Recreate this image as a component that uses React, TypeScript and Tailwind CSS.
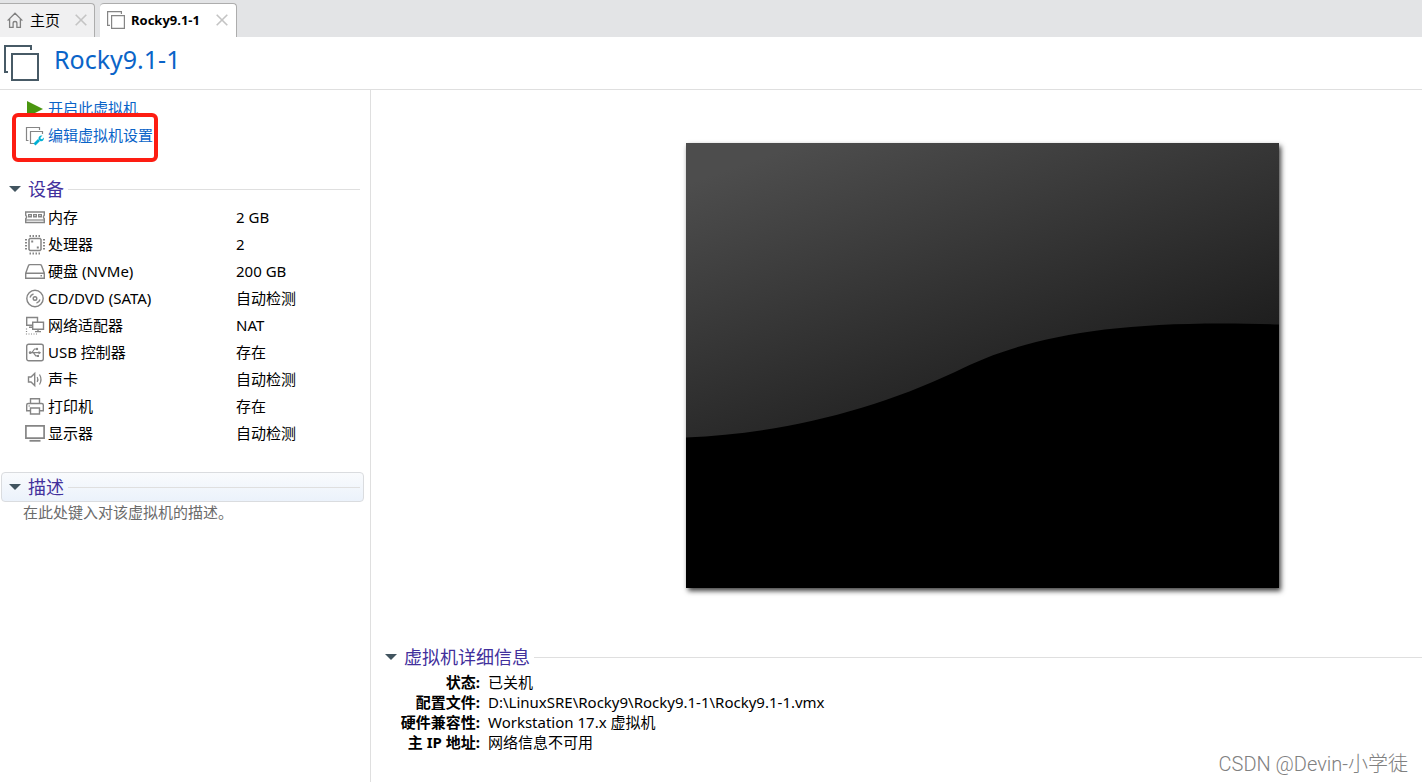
import { ReactNode, useState } from "react";

interface Device {
  name: string;
  value: string;
  icon: ReactNode;
}

interface SectionHeaderProps {
  title: string;
  open: boolean;
  onToggle: () => void;
}

const iconProps = {
  viewBox: "0 0 20 20",
  fill: "none",
  stroke: "#858585",
  strokeWidth: 1.4,
  "aria-hidden": true,
  className: "block size-5 shrink-0",
};

const devices: Device[] = [
  {
    name: "内存",
    value: "2 GB",
    icon: (
      <svg {...iconProps}>
        <path d="M.7 4h18.600v3.300l-.8.9v1.600l.8.9v3.800H.7v-3.800l.8-.9V8.200l-.8-.9z" />
        <path d="M3 6h4v3.500H3zM8 6h4v3.500H8zM13 6h4v3.500h-4z" fill="#858585" stroke="none" />
        <path d="M4.500 7h1v1h-1zM9.500 7h1v1h-1zM14.500 7h1v1h-1z" fill="#fff" stroke="none" />
        <path d="M1 12h18" strokeWidth="1.2" />
      </svg>
    ),
  },
  {
    name: "处理器",
    value: "2",
    icon: (
      <svg {...iconProps}>
        <path d="M4 4.500l1-1h10l1 1v10l-1 1H5l-1-1z" strokeWidth="1.5" />
        <path d="M4.500 1h11M4.500 18.500h11" strokeWidth="2" strokeDasharray="1.5 1.500" />
        <path d="M1 4v11.500M19 4v11.500" strokeWidth="2" strokeDasharray="1.5 1.500" />
        <path d="M6.200 6.500h2M11.800 12.500h2" strokeWidth="2" />
      </svg>
    ),
  },
  {
    name: "硬盘 (NVMe)",
    value: "200 GB",
    icon: (
      <svg {...iconProps}>
        <path d="M.7 11.200L3.500 3.500Q3.800 2.600 5 2.600h10q1.200 0 1.500.9l2.800 7.700v5H.7zM.7 11.200h18.600" />
        <path d="M15.500 13.700h1.500" />
      </svg>
    ),
  },
  {
    name: "CD/DVD (SATA)",
    value: "自动检测",
    icon: (
      <svg {...iconProps}>
        <circle cx="10" cy="9.500" r="8.200" />
        <circle cx="10" cy="9.500" r="1.800" />
        <path d="M5 8.500A5 5 0 0 1 8.500 5M15 10.500A5 5 0 0 1 11.500 14" />
      </svg>
    ),
  },
  {
    name: "网络适配器",
    value: "NAT",
    icon: (
      <svg {...iconProps}>
        <path d="M7 9.200H1.700V1.500h10.800V6M4 11.200h3" />
        <path d="M7.700 6.200h10.800v7H7.700zM13 13v2.500M10 15.600h6" />
        <path d="M1.500 12.500v5.500H13" strokeWidth="1.2" strokeDasharray="1 1.500" />
      </svg>
    ),
  },
  {
    name: "USB 控制器",
    value: "存在",
    icon: (
      <svg {...iconProps}>
        <rect x="1.7" y="1.2" width="16.6" height="16.6" rx="2" />
        <path d="M4.500 9.700H15M7 9.500L9.500 6H12M8.500 9.900l2.300 3h1.700" strokeWidth="1.2" />
        <circle cx="5.2" cy="9.7" r="1.4" fill="#858585" stroke="none" />
        <circle cx="12" cy="6" r="1.2" fill="#858585" stroke="none" />
        <path d="M13.500 7.900l2.700 1.800-2.700 1.800zM12 12h2v2h-2z" fill="#858585" stroke="none" />
      </svg>
    ),
  },
  {
    name: "声卡",
    value: "自动检测",
    icon: (
      <svg {...iconProps}>
        <path d="M3.500 7H6l3.700-3.500v12L6 12H3.500z" />
        <path d="M12.200 7q1.400 2.500 0 5M14.500 4.500q3 5 0 10" strokeWidth="1.2" />
      </svg>
    ),
  },
  {
    name: "打印机",
    value: "存在",
    icon: (
      <svg {...iconProps}>
        <path d="M5.500 6.500V1.700h9v4.800M5 13.700H1.700V8q0-1.500 1.500-1.500h13.600q1.500 0 1.500 1.500v5.700H15" />
        <path d="M5.500 11h9v6h-9z" />
        <path d="M3.500 9H5" strokeWidth="1" />
      </svg>
    ),
  },
  {
    name: "显示器",
    value: "自动检测",
    icon: (
      <svg {...iconProps}>
        <path d="M.9 1.900h18.200v12.300H.9z" strokeWidth="1.7" />
        <path d="M4.500 16.800h11" strokeWidth="1.8" />
      </svg>
    ),
  },
];

const details = [
  { label: "状态:", value: "已关机" },
  { label: "配置文件:", value: "D:\\LinuxSRE\\Rocky9\\Rocky9.1-1\\Rocky9.1-1.vmx" },
  { label: "硬件兼容性:", value: "Workstation 17.x 虚拟机" },
  { label: "主 IP 地址:", value: "网络信息不可用" },
];

function CloseIcon() {
  return (
    <svg viewBox="0 0 12 12" className="size-3" stroke="#c4c4c4" strokeWidth="1.6" aria-hidden>
      <path d="M.7.7l10.600 10.600M11.300.7L.7 11.300" />
    </svg>
  );
}

function SectionHeader({ title, open, onToggle }: SectionHeaderProps) {
  return (
    <button
      type="button"
      aria-expanded={open}
      onClick={onToggle}
      className="flex h-7 w-full items-center text-left"
    >
      <svg
        viewBox="0 0 12 6"
        className={open ? "h-[6px] w-3 shrink-0" : "h-[6px] w-3 shrink-0 -rotate-90"}
        aria-hidden
      >
        <path d="M0 0h12L6 6z" fill="#41545f" />
      </svg>
      <span className="ml-[7px] text-[18px] leading-7 text-[#42309c]">{title}</span>
      <span className="ml-1 h-px flex-1 bg-[#dfdfdf]" />
    </button>
  );
}

export default function App() {
  const [devicesOpen, setDevicesOpen] = useState(true);
  const [descriptionOpen, setDescriptionOpen] = useState(true);
  const [detailsOpen, setDetailsOpen] = useState(true);

  return (
    <div className="relative flex min-h-screen flex-col bg-white font-['Noto_Sans','Noto_Sans_CJK_SC',sans-serif] text-[15px] text-black">
      <nav className="flex h-[37px] shrink-0 items-end gap-[5px] bg-[#e3e4e6]">
        <div className="flex h-[34px] w-[95px] items-center rounded-tr border-t border-r border-[#adadad] bg-[#f0f0f1] pb-[2px] pl-[7px]">
          <svg viewBox="0 0 16 16" className="size-4 shrink-0" fill="none" stroke="#808080" strokeWidth="1.3" aria-hidden>
            <path d="M.6 8.600L8 1.200l7.400 7.400M2.600 7v8.300h3.500v-4q0-1.800 1.900-1.800t1.900 1.800v4h3.500V7" />
          </svg>
          <button type="button" className="ml-[7px] text-[15px] leading-5">
            主页
          </button>
          <button type="button" aria-label="关闭主页" className="ml-[15px]">
            <CloseIcon />
          </button>
        </div>
        <div className="flex h-[34px] w-[137px] items-center rounded-t border-t border-r border-[#adadad] bg-white pb-[2px] pl-[7px]">
          <svg viewBox="0 0 18 18" className="size-[18px] shrink-0" fill="none" stroke="#858585" strokeWidth="1.2" aria-hidden>
            <path d="M3 14.400H.6V.6h13.800V3M4.600 4.600h12.800v12.800H4.600z" />
          </svg>
          <button type="button" className="ml-[6px] text-[13px] leading-5 font-bold">
            Rocky9.1-1
          </button>
          <button type="button" aria-label="关闭 Rocky9.1-1" className="ml-4">
            <CloseIcon />
          </button>
        </div>
      </nav>

      <header className="flex h-[53px] shrink-0 items-center border-b border-[#dfdfdf] pl-1">
        <svg viewBox="0 0 36 36" className="size-9 shrink-0" fill="none" stroke="#475a66" strokeWidth="2" aria-hidden>
          <path d="M4 27H1V1h26v4" />
          <path d="M8 9h26v26H8z" />
        </svg>
        <h1 className="ml-[14px] pb-2 text-[25px] leading-8 text-[#0a64c8]">Rocky9.1-1</h1>
      </header>

      <div className="flex flex-1">
        <aside className="w-[371px] shrink-0 border-r border-[#dfdfdf] pt-[5px]">
          <div className="relative pl-[25px] text-[#0a64c8]">
            <button type="button" className="flex h-[27px] items-center gap-[3px]">
              <svg viewBox="0 0 20 20" className="size-5" aria-hidden>
                <path d="M2 2l16 8-16 8z" fill="#4a960f" />
              </svg>
              开启此虚拟机
            </button>
            <button type="button" className="flex h-[27px] items-center gap-[3px]">
              <svg {...iconProps}>
                <path d="M3.500 14.500h-2v-13h13V4M9 17.500H5.500v-12h12V8" strokeWidth="1.2" />
                <path d="M9.500 18.500l4.500-4.500" stroke="#00b0d4" strokeWidth="2.8" />
                <path d="M17.500 9.600l-2 2 .2 1.500 1.500.1 1.500-1.800c.7 2-.8 4.300-3.200 3.800l-2-2c-.4-2.500 1.800-4.300 4-3.600z" fill="#00b0d4" stroke="none" />
              </svg>
              编辑虚拟机设置
            </button>
            {/* highlight over the settings link */}
            <div className="pointer-events-none absolute top-[18px] left-3 h-[49px] w-[146px] rounded-md border-4 border-[#fd1d12]" />
          </div>

          <section className="mt-[26px] pr-[10px]">
            <div className="pl-[9px]">
              <SectionHeader title="设备" open={devicesOpen} onToggle={() => setDevicesOpen(!devicesOpen)} />
            </div>
            {devicesOpen && (
              <table className="mt-px w-full border-collapse text-left">
                <tbody>
                  {devices.map((device) => (
                    <tr key={device.name} className="h-[27px]">
                      <th scope="row" className="w-[236px] p-0 pl-[25px] font-normal">
                        <span className="flex items-center gap-[3px] leading-[27px]">
                          {device.icon}
                          {device.name}
                        </span>
                      </th>
                      <td className="p-0 leading-[27px]">{device.value}</td>
                    </tr>
                  ))}
                </tbody>
              </table>
            )}
          </section>

          <section className="mt-[25px] pr-[6px] pl-px">
            <div className="rounded border border-[#dadcdf] bg-linear-to-b from-[#f9fbfd] to-[#ebf2fb] pr-[3px] pl-[7px]">
              <SectionHeader
                title="描述"
                open={descriptionOpen}
                onToggle={() => setDescriptionOpen(!descriptionOpen)}
              />
            </div>
            {descriptionOpen && (
              <p className="pl-[22px] leading-5 text-[#6b6b6b]">在此处键入对该虚拟机的描述。</p>
            )}
          </section>
        </aside>

        <main className="min-w-0 flex-1">
          <div className="flex justify-center pt-[53px] pl-[172px]">
            <svg
              viewBox="0 0 593 445"
              className="w-full max-w-[593px] shadow-[2px_3px_5px_rgba(0,0,0,0.75)]"
              role="img"
              aria-label="虚拟机屏幕"
            >
              <defs>
                <linearGradient id="screen" gradientUnits="userSpaceOnUse" x1="60" y1="20" x2="175" y2="345">
                  <stop offset="0" stopColor="#4d4d4d" />
                  <stop offset="1" stopColor="#1c1c1c" />
                </linearGradient>
              </defs>
              <path d="M0 0h593v445H0z" fill="url(#screen)" />
              <path
                d="M0 294.500C95 291 188 267 269 229C340 193 430 176 593 181.500V445H0z"
                fill="#000"
              />
            </svg>
          </div>

          <section className="mt-[55px] pl-[14px]">
            <SectionHeader title="虚拟机详细信息" open={detailsOpen} onToggle={() => setDetailsOpen(!detailsOpen)} />
            {detailsOpen && (
              <dl className="mt-px grid grid-cols-[95px_1fr] gap-x-2 leading-5">
                {details.map((item) => (
                  <div key={item.label} className="contents">
                    <dt className="text-right font-bold">{item.label}</dt>
                    <dd>{item.value}</dd>
                  </div>
                ))}
              </dl>
            )}
          </section>
        </main>
      </div>

      <div className="absolute right-[14px] bottom-1 font-['Roboto','Noto_Sans_CJK_SC',sans-serif] text-[20px] leading-7 font-light text-[#808080]">
        CSDN @Devin-小学徒
      </div>
    </div>
  );
}
